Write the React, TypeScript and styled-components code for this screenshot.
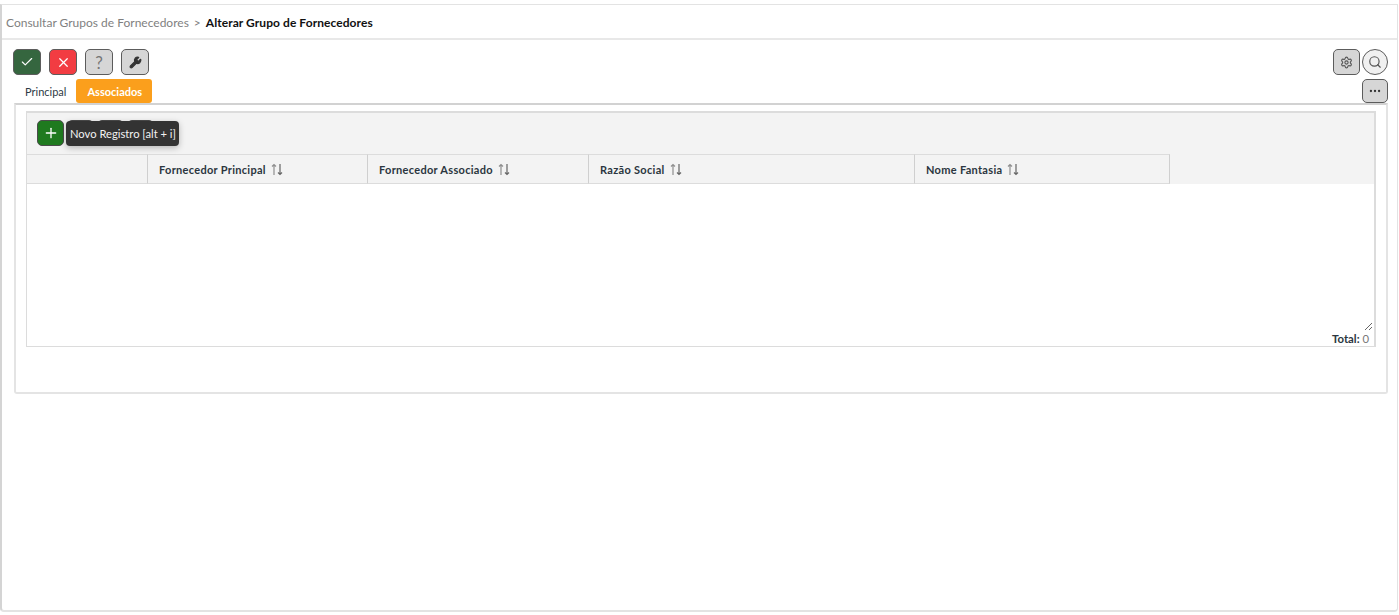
import styled, { createGlobalStyle } from 'styled-components';
import { Check, X, Wrench, Settings, Search, Ellipsis, Plus } from 'lucide-react';

const GlobalStyle = createGlobalStyle`
  html, body {
    margin: 0;
    padding: 0;
    background: #fff;
    font-family: Lato, "Liberation Sans", sans-serif;
  }
`;

const Frame = styled.div`
  box-sizing: border-box;
  margin-top: 4px;
  width: 1398px;
  height: 608px;
  border: 1px solid #e3e3e3;
  border-left: 2px solid #d4d4d4;
  border-bottom: 2px solid #e3e3e3;
  border-radius: 0 0 4px 4px;
`;

const Breadcrumb = styled.div`
  box-sizing: border-box;
  height: 35px;
  padding: 2px 4px 0;
  display: flex;
  align-items: center;
  gap: 5px;
  font-size: 12px;
  border-bottom: 2px solid #e8e8e8;
`;

const Crumb = styled.span`
  color: #7f7f7f;
`;

const Current = styled.span`
  color: #111;
  font-weight: 700;
  letter-spacing: 0.07px;
`;

const Toolbar = styled.div`
  display: flex;
  justify-content: space-between;
  padding: 9px 9px 0 11px;
`;

const ButtonGroup = styled.div<{ $gap: number }>`
  display: flex;
  gap: ${({ $gap }) => $gap}px;
`;

const ActionButton = styled.button<{ $bg: string; $fg: string; $height?: number; $width?: number }>`
  box-sizing: border-box;
  width: ${({ $width }) => $width ?? 28}px;
  height: ${({ $height }) => $height ?? 26}px;
  padding: 0;
  display: flex;
  align-items: center;
  justify-content: center;
  font-family: inherit;
  font-size: 17px;
  background: ${({ $bg }) => $bg};
  color: ${({ $fg }) => $fg};
  border: 1.5px solid #5c5c5c;
  border-radius: 5px;
`;

const RoundButton = styled(ActionButton)`
  border-radius: 50%;
`;

const TabRow = styled.div`
  display: flex;
  justify-content: space-between;
  align-items: flex-end;
  margin-top: 4px;
  padding: 0 9px 0 12px;
`;

const Tabs = styled.div`
  display: flex;
`;

const Tab = styled.div<{ $active?: boolean }>`
  box-sizing: border-box;
  height: 24px;
  padding: 0 10px 0 11px;
  display: flex;
  align-items: center;
  font-size: 11px;
  border-radius: 3px;
  font-weight: ${({ $active }) => ($active ? 700 : 400)};
  color: ${({ $active }) => ($active ? '#fff' : '#2d3a45')};
  background: ${({ $active }) => ($active ? '#fb9f1c' : 'transparent')};
`;

const Panel = styled.div`
  box-sizing: border-box;
  height: 291px;
  margin: 0 9px 0 12px;
  padding: 6px 10px 0 10px;
  border: 2px solid #e4e4e4;
  border-top-color: #d2d2d2;
  border-radius: 0 0 3px 3px;
`;

const Grid = styled.div`
  box-sizing: border-box;
  height: 236px;
  display: flex;
  flex-direction: column;
  border: 1px solid #dcdcdc;
  border-top-width: 2px;
  border-right-width: 2px;
`;

const GridToolbar = styled.div`
  position: relative;
  box-sizing: border-box;
  height: 41px;
  padding: 7px 10px;
  display: flex;
  gap: 3px;
  background: #f3f3f3;
`;

const GridButton = styled.button<{ $primary?: boolean }>`
  box-sizing: border-box;
  width: 27px;
  height: 26px;
  padding: 0;
  display: flex;
  align-items: center;
  justify-content: center;
  color: #fff;
  background: ${({ $primary }) => ($primary ? '#1f7a1f' : '#d6d6d6')};
  border: 1px solid #4b4b4b;
  border-radius: 5px;
`;

const Tooltip = styled.div`
  position: absolute;
  left: 39px;
  top: 8px;
  box-sizing: border-box;
  width: 113px;
  height: 25px;
  padding-left: 4px;
  display: flex;
  align-items: center;
  font-size: 11.2px;
  white-space: nowrap;
  color: #f2f2f2;
  background: #333;
  border-radius: 4px;
  box-shadow: 0 2px 6px rgba(0, 0, 0, 0.25);
`;

const HeaderRow = styled.div`
  display: flex;
  height: 30px;
  background: #f3f3f3;
`;

const HeaderCell = styled.div<{ $width: number }>`
  box-sizing: border-box;
  width: ${({ $width }) => $width}px;
  padding-left: 11px;
  display: flex;
  align-items: center;
  gap: 5px;
  font-size: 11px;
  font-weight: 700;
  letter-spacing: 0.3px;
  color: #2b3640;
  border-top: 1px solid #dcdcdc;
  border-bottom: 1px solid #dcdcdc;
  border-right: 1px solid #cfcfcf;
`;

const GridBody = styled.div`
  flex: 1;
  position: relative;
`;

const ResizeHandle = styled.svg`
  position: absolute;
  right: 1px;
  bottom: 15px;
`;

const Total = styled.div`
  position: absolute;
  right: 5px;
  bottom: 1px;
  font-size: 11.3px;
  color: #777;
`;

const TotalLabel = styled.b`
  color: #2b3640;
`;

const SortIcon = () => (
  <svg width="12" height="13" viewBox="0 0 12 13" fill="none" strokeWidth="1.2">
    <path d="M3 12V1.5M1 3.5l2-2 2 2" stroke="#8f8f8f" />
    <path d="M9 1v10.5M7 9.5l2 2 2-2" stroke="#666" />
  </svg>
);

const columns = [
  { label: '', width: 121 },
  { label: 'Fornecedor Principal', width: 220 },
  { label: 'Fornecedor Associado', width: 221 },
  { label: 'Razão Social', width: 326 },
  { label: 'Nome Fantasia', width: 255 },
];

export default function App() {
  return (
    <>
      <GlobalStyle />
      <Frame>
        <Breadcrumb>
          <Crumb>Consultar Grupos de Fornecedores</Crumb>
          <Crumb>&gt;</Crumb>
          <Current>Alterar Grupo de Fornecedores</Current>
        </Breadcrumb>
        <Toolbar>
          <ButtonGroup $gap={8}>
            <ActionButton $bg="#35663f" $fg="#fff"><Check size={14} /></ActionButton>
            <ActionButton $bg="#f23c42" $fg="#fff"><X size={15} /></ActionButton>
            <ActionButton $bg="#d6d6d6" $fg="#777">?</ActionButton>
            <ActionButton $bg="#d6d6d6" $fg="#333"><Wrench size={13} fill="#333" /></ActionButton>
          </ButtonGroup>
          <ButtonGroup $gap={2}>
            <ActionButton $bg="#d6d6d6" $fg="#555" $width={27}><Settings size={13} /></ActionButton>
            <RoundButton $bg="#f0f0f0" $fg="#555" $width={26}><Search size={14} /></RoundButton>
          </ButtonGroup>
        </Toolbar>
        <TabRow>
          <Tabs>
            <Tab>Principal</Tab>
            <Tab $active>Associados</Tab>
          </Tabs>
          <ActionButton $bg="#d6d6d6" $fg="#333" $width={26} $height={24}><Ellipsis size={14} /></ActionButton>
        </TabRow>
        <Panel>
          <Grid>
            <GridToolbar>
              <GridButton $primary><Plus size={16} /></GridButton>
              <GridButton />
              <GridButton />
              <GridButton />
              <Tooltip>Novo Registro [alt + i]</Tooltip>
            </GridToolbar>
            <HeaderRow>
              {columns.map(column => (
                <HeaderCell key={column.width} $width={column.width}>
                  {column.label}
                  {column.label && <SortIcon />}
                </HeaderCell>
              ))}
            </HeaderRow>
            <GridBody>
              <ResizeHandle width="9" height="9" viewBox="0 0 9 9" stroke="#666" strokeWidth="1">
                <path d="M1 8L8 1M5 8l3-3" />
              </ResizeHandle>
              <Total><TotalLabel>Total:</TotalLabel> 0</Total>
            </GridBody>
          </Grid>
        </Panel>
      </Frame>
    </>
  );
}
